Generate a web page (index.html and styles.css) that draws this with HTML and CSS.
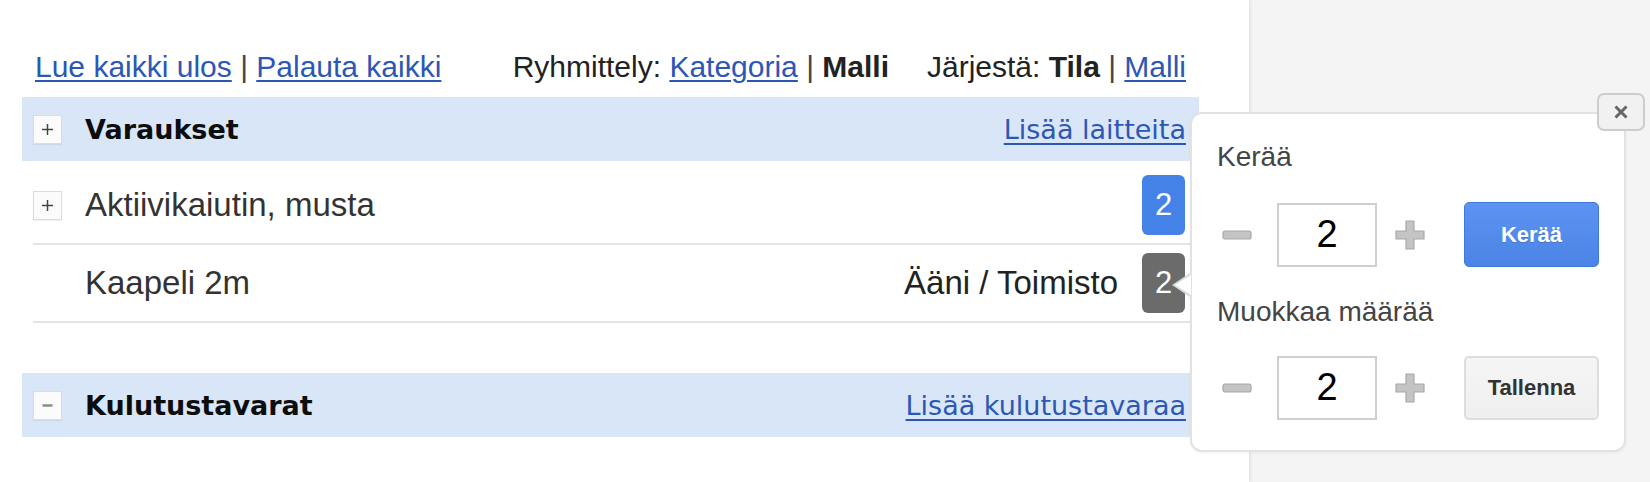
FILE: index.html
```html
<!DOCTYPE html>
<html lang="fi">
<head>
<meta charset="utf-8">
<title>Varaukset</title>
<link rel="stylesheet" href="styles.css">
</head>
<body>
<div class="page">
  <main class="main">
    <div class="toolbar">
      <div class="tb-left">
        <a href="#" class="link">Lue kaikki ulos</a> <span class="sep">|</span> <a href="#" class="link">Palauta kaikki</a>
      </div>
      <div class="tb-right">
        <span class="tb-group">Ryhmittely: <a href="#" class="link">Kategoria</a> <span class="sep">|</span> <b>Malli</b></span>
        <span class="tb-group">Järjestä: <b>Tila</b> <span class="sep">|</span> <a href="#" class="link">Malli</a></span>
      </div>
    </div>

    <section class="group">
      <div class="band">
        <span class="toggle">
          <svg width="13" height="13" viewBox="0 0 13 13"><path d="M6.5 1v11M1 6.5h11" stroke="#444" stroke-width="1.5"/></svg>
        </span>
        <span class="band-title">Varaukset</span>
        <a href="#" class="band-link">Lisää laitteita</a>
      </div>
      <div class="rows">
        <div class="row">
          <span class="toggle">
            <svg width="13" height="13" viewBox="0 0 13 13"><path d="M6.5 1v11M1 6.5h11" stroke="#444" stroke-width="1.5"/></svg>
          </span>
          <span class="row-name">Aktiivikaiutin, musta</span>
          <span class="badge badge-blue">2</span>
        </div>
        <div class="row">
          <span class="toggle-space"></span>
          <span class="row-name">Kaapeli 2m</span>
          <span class="row-loc">Ääni / Toimisto</span>
          <span class="badge badge-gray">2</span>
        </div>
      </div>
    </section>

    <section class="group group-2">
      <div class="band">
        <span class="toggle">
          <svg width="13" height="13" viewBox="0 0 13 13"><path d="M1.5 6.5h10" stroke="#888" stroke-width="2.4"/></svg>
        </span>
        <span class="band-title">Kulutustavarat</span>
        <a href="#" class="band-link">Lisää kulutustavaraa</a>
      </div>
    </section>
  </main>
  <aside class="side"></aside>

  <div class="popup">
    <span class="arrow"></span>
    <button class="close" type="button" aria-label="Sulje">
      <svg width="16" height="16" viewBox="0 0 16 16"><path d="M2.5 2.5l11 11M13.5 2.5l-11 11" stroke="#666" stroke-width="3" stroke-linecap="butt"/></svg>
    </button>
    <div class="pop-label">Kerää</div>
    <div class="pop-row">
      <span class="icon-minus">
        <svg width="30" height="10" viewBox="0 0 30 10"><rect x="1" y="1" width="28" height="8" rx="2" fill="#c4c4c4" stroke="#a8a8a8" stroke-width="1.2"/></svg>
      </span>
      <span class="qty">2</span>
      <span class="icon-plus">
        <svg width="30" height="30" viewBox="0 0 30 30"><path d="M11 1h8v10h10v8H19v10h-8V19H1v-8h10z" fill="#c4c4c4" stroke="#a8a8a8" stroke-width="1.2" stroke-linejoin="round"/></svg>
      </span>
      <button class="btn btn-primary" type="button">Kerää</button>
    </div>
    <div class="pop-label pop-label-2">Muokkaa määrää</div>
    <div class="pop-row">
      <span class="icon-minus">
        <svg width="30" height="10" viewBox="0 0 30 10"><rect x="1" y="1" width="28" height="8" rx="2" fill="#c4c4c4" stroke="#a8a8a8" stroke-width="1.2"/></svg>
      </span>
      <span class="qty">2</span>
      <span class="icon-plus">
        <svg width="30" height="30" viewBox="0 0 30 30"><path d="M11 1h8v10h10v8H19v10h-8V19H1v-8h10z" fill="#c4c4c4" stroke="#a8a8a8" stroke-width="1.2" stroke-linejoin="round"/></svg>
      </span>
      <button class="btn btn-default" type="button">Tallenna</button>
    </div>
  </div>
</div>
</body>
</html>
```

FILE: styles.css
```css
html, body {
  margin: 0;
  padding: 0;
  height: 100%;
  background: #ffffff;
}

body {
  font-family: "Liberation Sans", Arial, sans-serif;
  color: #222;
}

.page {
  position: relative;
  display: flex;
  width: 1650px;
  height: 482px;
  overflow: hidden;
}

.main {
  width: 1249px;
  flex: none;
  box-sizing: border-box;
  padding: 49px 50px 0 22px;
  background: #fff;
}

.side {
  flex: 1;
  background: #f4f4f4;
  border-left: 1px solid #e6e6e6;
  box-shadow: inset 3px 0 3px -2px rgba(0,0,0,0.06);
}

/* Toolbar */
.toolbar {
  display: flex;
  justify-content: space-between;
  align-items: center;
  height: 36px;
  line-height: 36px;
  font-size: 30px;
  padding: 0 13px;
  margin-bottom: 12px;
  white-space: nowrap;
  color: #222;
}

.tb-right {
  display: flex;
  gap: 38px;
}

.link {
  color: #2c57b5;
  text-decoration: underline;
  text-decoration-thickness: 2px;
  text-underline-offset: 3px;
}

.sep {
  color: #444;
}

b {
  font-weight: 700;
  color: #222;
}

/* Groups */
.band {
  display: flex;
  align-items: center;
  height: 64px;
  background: #d8e6f7;
  padding: 0 13px 0 11px;
}

.toggle {
  width: 27px;
  height: 27px;
  flex: none;
  display: flex;
  align-items: center;
  justify-content: center;
  background: #fbfbfb;
  border: 1px solid #dcdcdc;
  box-shadow: 0 1px 1px rgba(0,0,0,0.06);
  margin-right: 23px;
}

.toggle-space {
  width: 29px;
  flex: none;
  margin-right: 23px;
}

.band-title {
  font-family: "DejaVu Sans", Verdana, sans-serif;
  font-weight: 700;
  font-size: 27px;
  color: #0d0d0d;
  flex: 1;
}

.band-link {
  font-family: "DejaVu Sans", Verdana, sans-serif;
  font-size: 27px;
  color: #2c57b5;
  text-decoration: underline;
  text-decoration-thickness: 2px;
  text-underline-offset: 4px;
}

.rows {
  margin: 6px 0 0 11px;
}

.row {
  display: flex;
  align-items: center;
  padding: 8px 14px 8px 0;
  border-bottom: 2px solid #e4e4e4;
}

.row-name {
  flex: 1;
  font-size: 33px;
  color: #333;
}

.row-loc {
  font-size: 33px;
  color: #222;
  margin-right: 24px;
}

.badge {
  width: 43px;
  height: 60px;
  border-radius: 6px;
  display: flex;
  align-items: center;
  justify-content: center;
  color: #fff;
  font-size: 31px;
  flex: none;
}

.badge-blue {
  background: #4582e8;
}

.badge-gray {
  background: #6b6b6b;
}

.group-2 {
  margin-top: 50px;
}

/* Popup */
.popup {
  position: absolute;
  left: 1190px;
  top: 112px;
  width: 436px;
  height: 340px;
  box-sizing: border-box;
  background: #fff;
  border: 2px solid #e2e2e2;
  border-radius: 12px;
  padding: 27px 25px 0 25px;
  box-shadow: 0 1px 3px rgba(0,0,0,0.05);
}

.arrow {
  position: absolute;
  left: -20px;
  top: 159px;
  width: 0;
  height: 0;
  border-top: 12px solid transparent;
  border-bottom: 12px solid transparent;
  border-right: 18px solid #dadada;
}

.arrow::after {
  content: "";
  position: absolute;
  left: 3px;
  top: -10px;
  border-top: 10px solid transparent;
  border-bottom: 10px solid transparent;
  border-right: 16px solid #fff;
}

.close {
  position: absolute;
  right: -21px;
  top: -21px;
  width: 48px;
  height: 38px;
  box-sizing: border-box;
  padding: 0;
  margin: 0;
  display: flex;
  align-items: center;
  justify-content: center;
  background: #f1f1f1;
  border: 2px solid #cdcdcd;
  border-radius: 7px;
}

.pop-label {
  font-size: 28px;
  line-height: 32px;
  color: #444;
  margin-bottom: 29px;
}

.pop-label-2 {
  margin-top: 29px;
  margin-bottom: 27px;
}

.pop-row {
  display: flex;
  align-items: center;
  height: 65px;
}

.icon-minus {
  display: flex;
  margin-left: 5px;
  width: 30px;
}

.icon-plus {
  display: flex;
  margin-left: 18px;
  width: 30px;
}

.qty {
  width: 100px;
  height: 64px;
  box-sizing: border-box;
  margin-left: 25px;
  border: 2px solid #cfcfcf;
  display: flex;
  align-items: center;
  justify-content: center;
  font-size: 38px;
  color: #000;
  background: #fff;
}

.btn {
  margin-left: 39px;
  width: 135px;
  height: 64px;
  box-sizing: border-box;
  border-radius: 5px;
  font-family: "Liberation Sans", Arial, sans-serif;
  font-weight: 700;
  font-size: 22px;
  padding: 0;
}

.btn-primary {
  height: 65px;
  color: #fff;
  background: linear-gradient(#5d93f3, #4b84e5);
  border: 1px solid #3f79dd;
  text-shadow: 0 1px 1px rgba(0,0,0,0.15);
}

.btn-default {
  color: #333;
  background: linear-gradient(#f5f5f5, #efefef);
  border: 2px solid #dddddd;
}
```
